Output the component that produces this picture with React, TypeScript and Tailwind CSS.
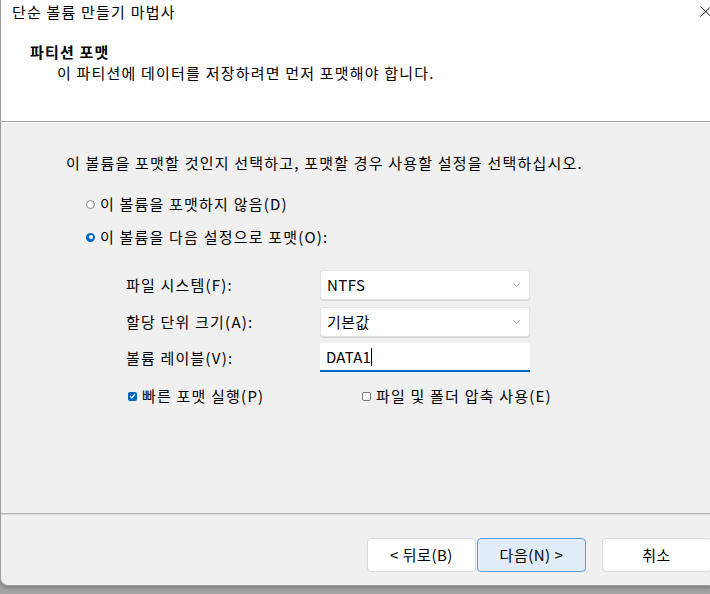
import { useState } from "react";

const font = {
  fontFamily: '"Noto Sans CJK KR", "Noto Sans", sans-serif',
};

function Chevron() {
  return (
    <svg width="7" height="4" viewBox="0 0 7 4" className="text-[#a8a8a8]">
      <path d="M0.5 0.5 L3.5 3.5 L6.5 0.5" fill="none" stroke="currentColor" strokeWidth="1" />
    </svg>
  );
}

function Combo({ value }: { value: string }) {
  return (
    <div className="flex h-[30px] w-[210px] items-center justify-between rounded-[3px] border border-[#e3e3e3] bg-white pl-[6px] pr-[9px] shadow-[0_1px_0_#d6d6d6]">
      <span className="tracking-[0.4px]">{value}</span>
      <Chevron />
    </div>
  );
}

function Radio({ checked }: { checked?: boolean }) {
  return checked ? (
    <span className="flex h-[9px] w-[9px] items-center justify-center rounded-full bg-[#0067c0]">
      <span className="h-[4px] w-[4px] rounded-full bg-white" />
    </span>
  ) : (
    <span className="h-[9px] w-[9px] rounded-full border border-[#8a8a8a] bg-white" />
  );
}

function Check({ checked }: { checked?: boolean }) {
  return checked ? (
    <span className="flex h-[9px] w-[9px] items-center justify-center rounded-[2px] bg-[#0067c0]">
      <svg width="7" height="6" viewBox="0 0 7 6">
        <path d="M1 3 L2.8 4.8 L6 1" fill="none" stroke="white" strokeWidth="1.2" />
      </svg>
    </span>
  ) : (
    <span className="h-[9px] w-[9px] rounded-[2px] border border-[#7a7a7a] bg-white" />
  );
}

export default function App() {
  const [format, setFormat] = useState(true);
  const [quick, setQuick] = useState(true);
  const [compress, setCompress] = useState(false);

  return (
    <div
      className="relative h-[594px] w-[710px] overflow-hidden bg-gradient-to-b from-[#b4b4b4] to-[#a4a4a4] text-[15px] leading-[20px] tracking-[1.2px] text-black"
      style={font}
    >
      <div className="flex h-[586px] w-[712px] flex-col overflow-hidden rounded-bl-[8px] border-b border-l border-[#9e9e9e] bg-[#f0f0f0] shadow-[0_2px_4px_rgba(0,0,0,0.25)]">
        {/* header */}
        <div className="h-[121px] bg-white">
          <div className="flex h-[23px] items-center justify-between pl-[11px] pr-[2px]">
            <span>단순 볼륨 만들기 마법사</span>
            <svg width="12" height="11" viewBox="0 0 12 11" className="mr-[-2px]">
              <path d="M0.5 0.5 L11 10.5 M11 0.5 L0.5 10.5" stroke="#1a1a1a" strokeWidth="1" />
            </svg>
          </div>
          <div className="mt-[19px] pl-[29px] font-bold">파티션 포맷</div>
          <div className="mt-px pl-[56px]">
            이 파티션에 데이터를 저장하려면 먼저 포맷해야 합니다.
          </div>
        </div>
        <div className="h-px bg-[#a0a0a0]" />
        <div className="h-px bg-[#fbfbfb]" />

        {/* body */}
        <div className="h-[390px] pl-[65px] pt-[30px]">
          <div>이 볼륨을 포맷할 것인지 선택하고, 포맷할 경우 사용할 설정을 선택하십시오.</div>

          <label
            className="mt-[21px] flex items-center gap-[5px] pl-[20px]"
            onClick={() => setFormat(false)}
          >
            <Radio checked={!format} />
            <span>이 볼륨을 포맷하지 않음(D)</span>
          </label>
          <label
            className="mt-[13px] flex items-center gap-[5px] pl-[20px]"
            onClick={() => setFormat(true)}
          >
            <Radio checked={format} />
            <span>이 볼륨을 다음 설정으로 포맷(O):</span>
          </label>

          <div className="mt-[23px] flex flex-col gap-[7px] pl-[60px]">
            <div className="flex items-center">
              <span className="w-[194px]">파일 시스템(F):</span>
              <Combo value="NTFS" />
            </div>
            <div className="flex items-center">
              <span className="w-[194px]">할당 단위 크기(A):</span>
              <Combo value="기본값" />
            </div>
            <div className="mt-[-1px] flex items-center">
              <span className="w-[194px]">볼륨 레이블(V):</span>
              <div className="flex h-[29px] w-[210px] items-center border-b-2 border-[#0067c0] bg-white pl-[6px]">
                <span className="tracking-[0.2px]">DATA1</span>
                <span className="h-[18px] w-px bg-black" />
              </div>
            </div>
          </div>

          <div className="mt-[14px] flex items-center pl-[62px]">
            <label className="flex w-[234px] items-center gap-[5px]" onClick={() => setQuick(!quick)}>
              <Check checked={quick} />
              <span>빠른 포맷 실행(P)</span>
            </label>
            <label className="flex items-center gap-[5px]" onClick={() => setCompress(!compress)}>
              <Check checked={compress} />
              <span>파일 및 폴더 압축 사용(E)</span>
            </label>
          </div>
        </div>

        <div className="h-px bg-[#b4b4b4]" />
        <div className="h-px bg-[#d8d8d8]" />

        {/* footer */}
        <div className="flex pl-[366px] pt-[23px] tracking-[0.5px]">
          <button className="h-[34px] w-[109px] rounded-[4px] border border-[#dadada] bg-white">
            &lt; 뒤로(B)
          </button>
          <button className="ml-[1px] h-[34px] w-[109px] rounded-[4px] border border-[#5a9fdc] bg-[#e0edf9]">
            다음(N) &gt;
          </button>
          <button className="ml-[16px] h-[34px] w-[109px] rounded-[4px] border border-[#dadada] bg-white">
            취소
          </button>
        </div>
      </div>
    </div>
  );
}
